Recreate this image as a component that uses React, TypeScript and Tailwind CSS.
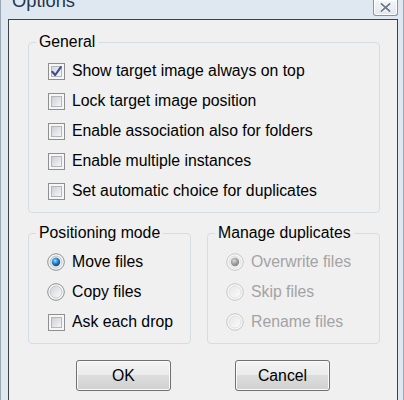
import { useId } from "react";

const font = "font-['Liberation_Sans',Arial,sans-serif]";

function CheckBox({ checked = false }: { checked?: boolean }) {
  const id = useId();
  return (
    <svg width="17" height="17" viewBox="0 0 17 17" className="shrink-0">
      <defs>
        <linearGradient id={id} x1="0" y1="0" x2="1" y2="1">
          <stop offset="0" stopColor={checked ? "#d3d8e0" : "#c9cdd3"} />
          <stop offset="1" stopColor="#f8f8f8" />
        </linearGradient>
      </defs>
      <rect x="0.5" y="0.5" width="16" height="16" fill="#f6f6f6" stroke="#8f8f8f" />
      <rect x="3.5" y="3.5" width="10" height="10" fill={`url(#${id})`} stroke="#b3b7bc" />
      {checked && (
        <path
          d="M4.3 8.8 L7.2 12 L12.8 4.2"
          fill="none"
          stroke="#3b4d8c"
          strokeWidth="2.1"
          strokeLinecap="round"
          strokeLinejoin="round"
        />
      )}
    </svg>
  );
}

function Radio({ checked = false, disabled = false }: { checked?: boolean; disabled?: boolean }) {
  const id = useId();
  const ring = disabled ? "#c6c6c6" : "#8e8f8f";
  return (
    <svg width="18" height="18" viewBox="0 0 18 18" className="shrink-0">
      <defs>
        <linearGradient id={`${id}a`} x1="0" y1="0" x2="1" y2="1">
          <stop offset="0" stopColor={disabled ? "#e6e6e6" : "#cfd2d6"} />
          <stop offset="1" stopColor="#fbfbfb" />
        </linearGradient>
        <radialGradient id={`${id}b`} cx="0.4" cy="0.35" r="0.7">
          <stop offset="0" stopColor={disabled ? "#dcdcdc" : "#9fe0ff"} />
          <stop offset="0.45" stopColor={disabled ? "#a8a8a8" : "#2a8ad2"} />
          <stop offset="1" stopColor={disabled ? "#7e7e7e" : "#0b3a70"} />
        </radialGradient>
      </defs>
      <circle cx="9" cy="9" r="8.3" fill="#f7f7f7" stroke={ring} />
      <circle cx="9" cy="9" r="6" fill={`url(#${id}a)`} stroke={disabled ? "#dadada" : "#b8bcc1"} strokeWidth="0.8" />
      {checked && <circle cx="9" cy="9" r="4.2" fill={`url(#${id}b)`} />}
    </svg>
  );
}

function Row({ children, label, disabled = false }: { children: React.ReactNode; label: string; disabled?: boolean }) {
  return (
    <div className="h-[30px] flex items-center gap-[7px]">
      {children}
      <span className={disabled ? "text-[#a3a3a3]" : "text-black"}>{label}</span>
    </div>
  );
}

function Group({ title, width, children }: { title: string; width: string; children: React.ReactNode }) {
  return (
    <fieldset className={`${width} border border-[#d3dde4] rounded-[4px] pb-[6px]`}>
      <legend className="ml-[7px] px-[3px] leading-[18px] text-black">{title}</legend>
      <div className="pt-[5px] pl-[19px]">{children}</div>
    </fieldset>
  );
}

function Button({ label }: { label: string }) {
  return (
    <button className="w-[95px] h-[31px] rounded-[3px] border border-[#707070] bg-[linear-gradient(#f3f3f3_0%,#ebebeb_50%,#dddddd_50%,#d0d0d0_100%)] shadow-[inset_0_0_0_1px_#fbfbfb] text-black leading-none">
      {label}
    </button>
  );
}

export default function App() {
  return (
    <div className={`${font} w-[404px] h-[400px] overflow-hidden bg-[#dfe8f1] border-x border-[#9aa7b4] flex flex-col text-[15.8px]`}>
      {/* title bar */}
      <div className="h-[19px] flex justify-between items-start overflow-hidden">
        <span className="ml-[11px] -mt-[8px] text-[18.3px] leading-[18px] text-[#22354d]">Options</span>
        <div className="w-[25px] h-[16px] mr-[5px] border-x border-b border-[#8593a2] rounded-b-[3px] bg-[linear-gradient(#f4f7fa,#dfe6ee)] shadow-[inset_0_0_0_1px_#ffffff] flex items-center justify-center">
          <svg width="11" height="9" viewBox="0 0 11 9">
            <path d="M1.5 1 L9.5 8 M9.5 1 L1.5 8" stroke="#ffffff" strokeWidth="3.6" strokeLinecap="square" />
            <path d="M1.5 1 L9.5 8 M9.5 1 L1.5 8" stroke="#6f7b88" strokeWidth="1.8" strokeLinecap="square" />
          </svg>
        </div>
      </div>

      {/* client area */}
      <div className="flex-1 ml-[7px] mr-[5px] border-t border-x border-[#3d4247] bg-[#f0f0f0] pt-[13px] pl-[19px] pr-[17px]">
        <Group title="General" width="w-[352px]">
          <Row label="Show target image always on top"><CheckBox checked /></Row>
          <Row label="Lock target image position"><CheckBox /></Row>
          <Row label="Enable association also for folders"><CheckBox /></Row>
          <Row label="Enable multiple instances"><CheckBox /></Row>
          <Row label="Set automatic choice for duplicates"><CheckBox /></Row>
        </Group>

        <div className="mt-[11px] flex gap-[16px]">
          <Group title="Positioning mode" width="w-[163px]">
            <div className="-ml-[1px]">
              <Row label="Move files"><Radio checked /></Row>
              <Row label="Copy files"><Radio /></Row>
            </div>
            <Row label="Ask each drop"><CheckBox /></Row>
          </Group>
          <Group title="Manage duplicates" width="w-[173px]">
            <div className="-ml-[1px]">
              <Row label="Overwrite files" disabled><Radio checked disabled /></Row>
              <Row label="Skip files" disabled><Radio disabled /></Row>
              <Row label="Rename files" disabled><Radio disabled /></Row>
            </div>
          </Group>
        </div>

        <div className="mt-[16px] flex pl-[48px] gap-[64px]">
          <Button label="OK" />
          <Button label="Cancel" />
        </div>
      </div>
    </div>
  );
}
